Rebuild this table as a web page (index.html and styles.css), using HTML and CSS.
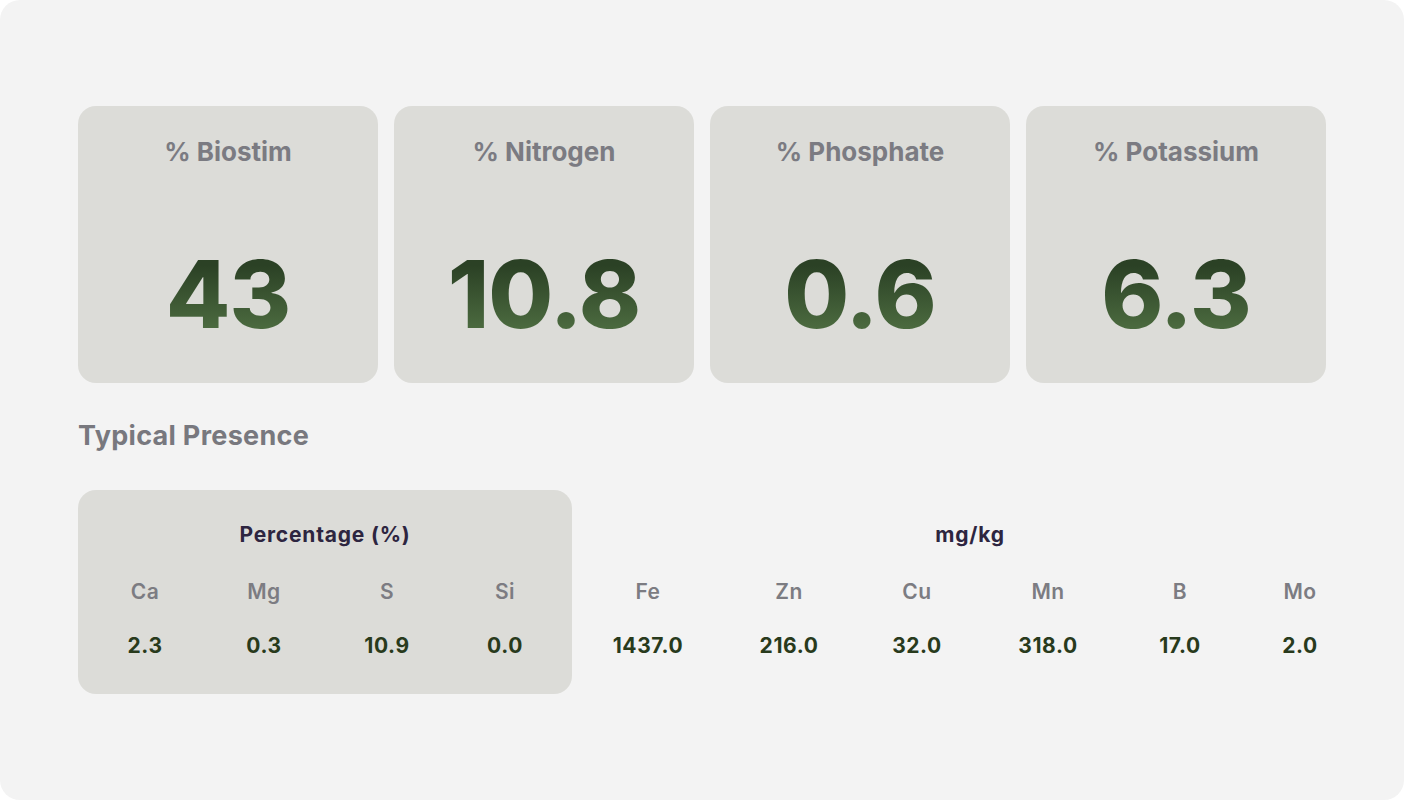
FILE: index.html
```html
<!DOCTYPE html>
<html>
<head>
<meta charset="utf-8">
<link rel="stylesheet" href="styles.css">
</head>
<body>
<div class="page">
  <div class="cards">
    <div class="card"><div class="card-title">% Biostim</div><div class="card-value"><span>43</span></div></div>
    <div class="card"><div class="card-title">% Nitrogen</div><div class="card-value"><span>10.8</span></div></div>
    <div class="card"><div class="card-title">% Phosphate</div><div class="card-value"><span>0.6</span></div></div>
    <div class="card"><div class="card-title">% Potassium</div><div class="card-value"><span>6.3</span></div></div>
  </div>
  <h2 class="section-title">Typical Presence</h2>
  <div class="presence">
    <div class="group group-pct">
      <div class="group-title">Percentage (%)</div>
      <div class="grid grid-pct">
        <div class="el">Ca</div><div class="el">Mg</div><div class="el">S</div><div class="el">Si</div>
        <div class="val">2.3</div><div class="val">0.3</div><div class="val">10.9</div><div class="val">0.0</div>
      </div>
    </div>
    <div class="group group-mg">
      <div class="group-title">mg/kg</div>
      <div class="grid grid-mg">
        <div class="el">Fe</div><div class="el">Zn</div><div class="el">Cu</div><div class="el">Mn</div><div class="el">B</div><div class="el">Mo</div>
        <div class="val">1437.0</div><div class="val">216.0</div><div class="val">32.0</div><div class="val">318.0</div><div class="val">17.0</div><div class="val">2.0</div>
      </div>
    </div>
  </div>
</div>
</body>
</html>
```

FILE: styles.css
```css
* { box-sizing: border-box; }
html, body { margin: 0; padding: 0; background: #ffffff; }
body { font-family: Inter, "Liberation Sans", sans-serif; }
.page {
  width: 1404px;
  height: 800px;
  background: #f3f3f3;
  border-radius: 20px;
  padding: 106px 78px 0 78px;
  overflow: hidden;
}
.cards {
  display: flex;
  gap: 16px;
}
.card {
  width: 300px;
  height: 277px;
  background: #dcdcd8;
  border-radius: 18px;
  display: flex;
  flex-direction: column;
  align-items: center;
}
.card-title {
  margin-top: 30px;
  font-size: 26px;
  font-weight: 700;
  color: #7b7b82;
  line-height: 32px;
}
.card-value {
  margin-top: 70px;
  font-size: 94px;
  font-weight: 800;
  line-height: 112px;
  letter-spacing: -1px;
}
.card-value span {
  background: linear-gradient(180deg, #2b4125 25%, #4b6a3f 80%);
  -webkit-background-clip: text;
  background-clip: text;
  color: transparent;
}
.section-title {
  margin: 37px 0 0 0;
  font-size: 27px;
  font-weight: 700;
  color: #78787e;
  line-height: 32px;
  letter-spacing: 0.3px;
}
.presence {
  margin-top: 38px;
  display: flex;
}
.group {
  flex-shrink: 0;
  height: 204px;
  padding-top: 31px;
}
.group-pct {
  width: 494px;
  background: #dcdcd8;
  border-radius: 18px;
  padding-left: 7px;
}
.group-mg {
  padding-left: 6px;
}
.group-title {
  text-align: center;
  font-size: 21px;
  font-weight: 700;
  color: #2d2540;
  line-height: 28px;
  letter-spacing: 0.8px;
}
.group-pct .group-title { width: 480px; }
.group-mg .group-title { width: 784px; }
.grid {
  display: grid;
  margin-top: 29px;
  row-gap: 26px;
  text-align: center;
}
.grid-pct { grid-template-columns: 120px 118px 128px 108px; }
.grid-mg { grid-template-columns: 140px 142px 114px 148px 116px 124px; }
.el {
  font-size: 21px;
  font-weight: 600;
  color: #7c7c82;
  line-height: 28px;
  letter-spacing: 0.5px;
}
.val {
  font-size: 21px;
  font-weight: 700;
  color: #283a1c;
  line-height: 28px;
  letter-spacing: 0.6px;
}
```
